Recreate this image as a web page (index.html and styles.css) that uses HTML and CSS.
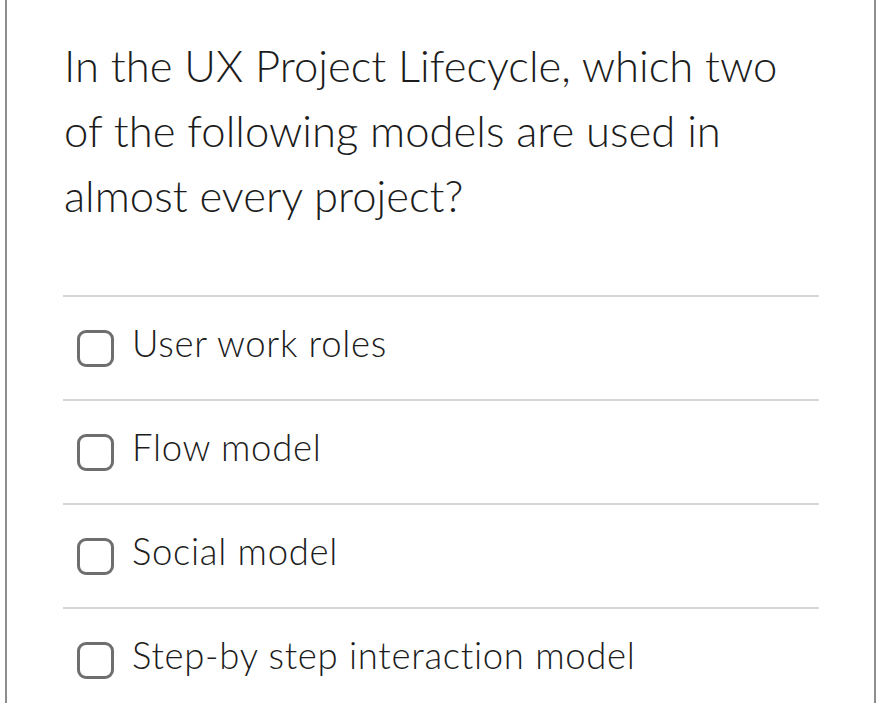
FILE: index.html
```html
<!DOCTYPE html>
<html>
<head>
    <meta charset="utf-8">
    <meta name="viewport" content="width=device-width, initial-scale=1.0">
    <link rel="stylesheet" href="styles.css">
</head>
<body>
    <div class="card">
        <p class="question">In the UX Project Lifecycle, which two of the following models are used in almost every project?</p>

        <ul class="options">
            <li class="option">
                <span class="checkbox"></span>
                <span class="option_text">User work roles</span>
            </li>
            <li class="option">
                <span class="checkbox"></span>
                <span class="option_text">Flow model</span>
            </li>
            <li class="option">
                <span class="checkbox"></span>
                <span class="option_text">Social model</span>
            </li>
            <li class="option">
                <span class="checkbox"></span>
                <span class="option_text">Step-by step interaction model</span>
            </li>
        </ul>
    </div>
</body>
</html>
```

FILE: styles.css
```css
body {
    font-family: 'Lato', 'Helvetica', 'Arial', sans-serif;
    background-color: #ffffff;
    color: #1c1c1c;
    margin: 0;
}

/* tarjeta con los bordes laterales */
.card {
    margin: 0 5px;
    min-height: 703px;
    border-left: 2px solid #8e8e8e;
    border-right: 2px solid #8e8e8e;
    padding: 33px 55px 0 56px;
    box-sizing: border-box;
}

.question {
    margin: 0 0 67px 1px;
    font-size: 43.6px;
    font-weight: 300;
    line-height: 65px;
    width: 730px;
}

.options {
    list-style: none;
    margin: 0;
    padding: 0;
}

.option {
    display: flex;
    align-items: center;
    height: 102px;
    border-top: 2px solid #d6d6d6;
}

.checkbox {
    width: 31px;
    height: 31px;
    margin-left: 14px;
    border: 3.5px solid #6e6e6e;
    border-radius: 9px;
    flex-shrink: 0;
}

.option_text {
    margin-left: 18px;
    padding-bottom: 10px;
    font-size: 36.5px;
    font-weight: 300;
    letter-spacing: 0.7px;
}
```
